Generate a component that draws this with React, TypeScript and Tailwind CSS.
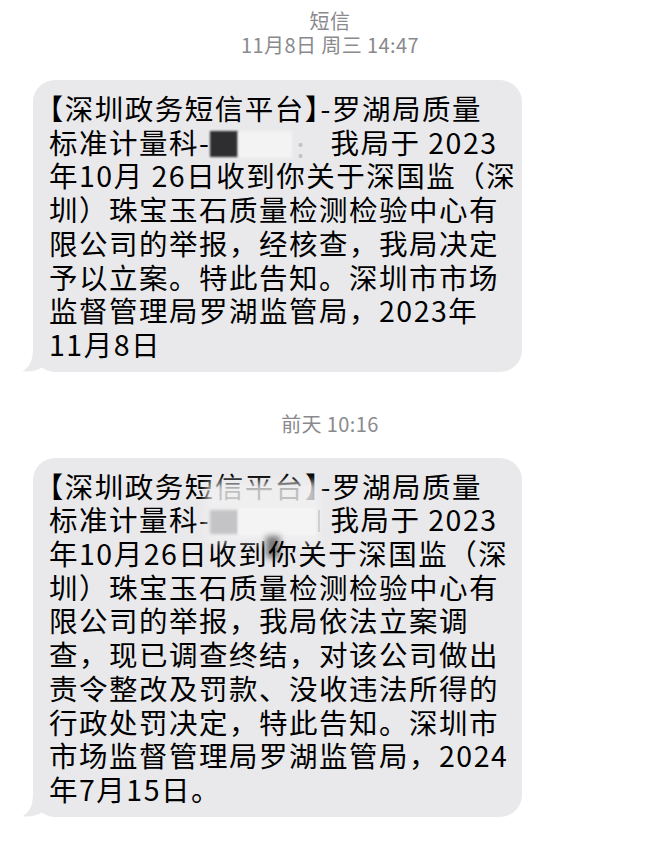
import React from "react";

const FONT = { fontFamily: '"Noto Sans CJK SC", "Noto Sans", sans-serif' };

function Tail() {
  return (
    <svg
      className="absolute bottom-0 left-[-12px]"
      width="30"
      height="24"
      viewBox="0 0 30 24"
    >
      <path
        d="M12 0 C12 11 9.5 18.5 1.5 23.2 C8 24.2 15.5 22.8 21 19.5 L30 19.5 L30 0 Z"
        fill="#e9e9eb"
      />
    </svg>
  );
}

function Bubble({ children }: { children: React.ReactNode }) {
  return (
    <div className="relative ml-[33px] w-[489px] rounded-[22px] bg-[#e9e9eb] pl-[16px] pr-2 py-[11px] text-[28.5px] leading-[33.7px] tracking-[1.5px] text-black">
      <Tail />
      <div className="relative">{children}</div>
    </div>
  );
}

function Line({ children }: { children: React.ReactNode }) {
  return <div className="whitespace-nowrap">{children}</div>;
}

function Half({ children }: { children: React.ReactNode }) {
  return <span className="[font-feature-settings:'halt']">{children}</span>;
}

function Title() {
  return (
    <Line>
      <Half>【</Half>深圳政务短信平台<Half>】</Half>-罗湖局质量
    </Line>
  );
}

export default function App() {
  return (
    <div className="min-h-[862px] w-[660px] bg-white" style={FONT}>
      <div className="pt-[9px] text-center text-[20px] leading-6 tracking-[0.4px] text-[#8a8a8e]">
        <div>短信</div>
        <div>11月8日 周三 14:47</div>
      </div>

      <div className="mt-[23px]">
        <Bubble>
          <Title />
          <Line>
            标准计量科-
            <span className="relative inline-block h-[26px] w-[120px] align-[-3px]">
              <span className="absolute left-0 top-0 h-[26px] w-[28px] bg-[#2e2e30] blur-[1px]" />
              <span className="absolute left-[28px] top-0 h-[27px] w-[54px] bg-[#f3f3f4] blur-[1.5px]" />
              <span className="absolute left-[86px] top-[-2px] text-[#c2c2c5]">:</span>
            </span>
            我局于 2023
          </Line>
          <Line>年10月 26日收到你关于深国监（深</Line>
          <Line>圳）珠宝玉石质量检测检验中心有</Line>
          <Line>限公司的举报，经核查，我局决定</Line>
          <Line>予以立案。特此告知。深圳市市场</Line>
          <Line>监督管理局罗湖监管局，2023年</Line>
          <Line>11月8日</Line>
        </Bubble>
      </div>

      <div className="mt-[40px] text-center text-[20px] leading-6 tracking-[0.4px] text-[#8a8a8e]">
        前天 10:16
      </div>

      <div className="mt-[22px]">
        <Bubble>
          <Title />
          <Line>
            标准计量科-
            <span className="relative inline-block h-[26px] w-[120px] align-[-3px]">
              <span className="absolute left-[-4px] top-[-26px] h-[60px] w-[114px] bg-[#f1f1f2] opacity-80 blur-[4px]" />
              <span className="absolute left-0 top-[2px] h-[24px] w-[28px] bg-[#c4c4c7] blur-[1.5px]" />
              <span className="absolute left-[28px] top-0 h-[27px] w-[78px] bg-[#f4f4f5] blur-[1px]" />
              <span className="absolute left-[108px] top-[2px] h-[22px] w-[2px] bg-[#cfcfd2]" />
            </span>
            我局于 2023
          </Line>
          <Line>
            年10月26日收到
            <span className="relative">
              <span className="absolute left-[-2px] top-[4px] h-[22px] w-[14px] bg-[#2a2a2a] opacity-60 blur-[3px]" />
              <span className="relative">你</span>
            </span>
            关于深国监（深
          </Line>
          <Line>圳）珠宝玉石质量检测检验中心有</Line>
          <Line>限公司的举报，我局依法立案调</Line>
          <Line>查，现已调查终结，对该公司做出</Line>
          <Line>责令整改及罚款、没收违法所得的</Line>
          <Line>行政处罚决定，特此告知。深圳市</Line>
          <Line>市场监督管理局罗湖监管局，2024</Line>
          <Line>年7月15日。</Line>
        </Bubble>
      </div>
    </div>
  );
}
